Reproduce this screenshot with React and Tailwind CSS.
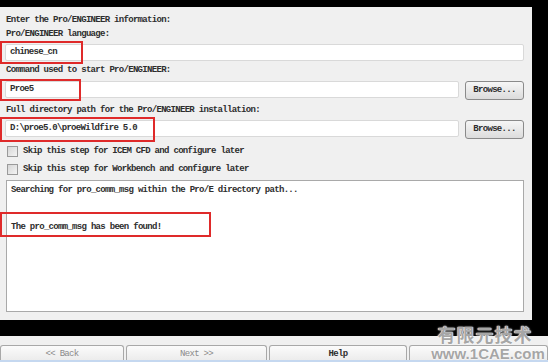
// Pro/ENGINEER setup page of the ANSYS Workbench configurator (screenshot recreation)

const mono = "font-['Liberation_Mono',monospace] font-bold text-[9px] tracking-[-0.7px] text-[#2e2e2e]";

function Label({ children, className = '' }) {
    return <div className={`h-[14px] leading-[14px] pl-[1px] ${className}`}>{children}</div>;
}

function TextBox({ value, className = '' }) {
    return (
        <div className={`h-[17px] bg-white border border-[#d9d9d9] rounded-[2px] pl-[4px] leading-[15px] ${className}`}>
            {value}
        </div>
    );
}

function Browse() {
    return (
        <button className="w-[59px] h-[19px] ml-[6px] rounded-[3px] border border-[#8a8a8a] bg-gradient-to-b from-[#f6f6f6] to-[#dcdcdc] leading-[17px] text-center">
            Browse...
        </button>
    );
}

function Check({ children, className = '' }) {
    return (
        <div className={`flex items-center h-[14px] ${className}`}>
            <span className="w-[11px] h-[11px] ml-[2px] border border-[#9a9a9a] bg-gradient-to-br from-[#d6d6d6] to-[#f4f4f4]" />
            <span className="ml-[5px] leading-[14px]">{children}</span>
        </div>
    );
}

function WizardButton({ children, className = '', dim }) {
    return (
        <div
            className={`h-[15px] rounded-t-[3px] border border-b-0 border-[#a8a8a8] bg-gradient-to-b from-[#fbfbfb] to-[#ececec] text-center leading-[16px] ${dim ? 'text-[#8a8a8a] font-normal' : ''} ${className}`}
        >
            {children}
        </div>
    );
}

export default function App() {
    return (
        <div className={`relative w-[548px] h-[362px] overflow-hidden bg-black ${mono}`}>
            {/* top strip */}
            <div className="h-[7px]" />

            <div className="flex h-[313px]">
                {/* main panel */}
                <div className="w-[532px] bg-[#f0f0f0] pl-[5px] pr-[8px]">
                    <Label className="mt-[6px]">Enter the Pro/ENGINEER information:</Label>
                    <Label>Pro/ENGINEER language:</Label>
                    <TextBox value="chinese_cn" className="mt-[3px]" />

                    <Label className="mt-[2px]">Command used to start Pro/ENGINEER:</Label>
                    <div className="flex mt-[4px] h-[19px]">
                        <TextBox value="Proe5" className="flex-1" />
                        <Browse />
                    </div>

                    <Label className="mt-[3px]">Full directory path for the Pro/ENGINEER installation:</Label>
                    <div className="flex mt-[3px] h-[19px]">
                        <TextBox value="D:\proe5.0\proeWildfire 5.0" className="flex-1" />
                        <Browse />
                    </div>

                    <Check className="mt-[5px]">Skip this step for ICEM CFD and configure later</Check>
                    <Check className="mt-[4px]">Skip this step for Workbench and configure later</Check>

                    {/* log output */}
                    <div className="mt-[4px] ml-[1px] h-[132px] bg-white border border-[#a9a9a9] pl-[4px] pt-[2px]">
                        <div className="h-[14px] leading-[14px]">Searching for pro_comm_msg within the Pro/E directory path...</div>
                        <div className="h-[14px] mt-[23px] leading-[14px]">The pro_comm_msg has been found!</div>
                    </div>
                </div>
                <div className="flex-1" />
            </div>

            {/* black band, then wizard buttons */}
            <div className="h-[16px]" />
            <div className="h-[26px] bg-[#f0f0f0] pt-[9px]">
                <div className="flex gap-[2px] h-[15px]">
                    <WizardButton className="w-[124px]" dim>&lt;&lt; Back</WizardButton>
                    <WizardButton className="w-[141px]" dim>Next &gt;&gt;</WizardButton>
                    <WizardButton className="w-[138px]">Help</WizardButton>
                    <WizardButton className="flex-1" />
                </div>
                <div className="h-[2px] bg-[#c5d8f0]" />
            </div>

            {/* annotation boxes */}
            <div className="absolute left-0 top-[41px] w-[83px] h-[23px] border-2 border-[#df2a2a]" />
            <div className="absolute left-0 top-[79px] w-[81px] h-[22px] border-2 border-[#df2a2a]" />
            <div className="absolute left-0 top-[117px] w-[155px] h-[25px] border-2 border-[#df2a2a]" />
            <div className="absolute left-0 top-[212px] w-[211px] h-[25px] border-2 border-[#df2a2a]" />

            {/* watermark */}
            <div className="absolute left-[432px] top-[324px] w-[106px] text-center font-['Noto_Sans_CJK_SC',sans-serif] font-bold text-[18px] leading-[20px] tracking-[1px] text-[#a6a6a6] [text-shadow:0_0_1px_#fff,0_0_1px_#fff,0_0_2px_#fff]">
                有限元技术
            </div>
            <div className="absolute left-[428px] top-[346px] w-[120px] text-center font-['Liberation_Sans',sans-serif] font-bold text-[15px] leading-[16px] tracking-[0px] text-[#a6a6a6] [text-shadow:0_0_1px_#fff,0_0_1px_#fff,0_0_2px_#fff]">
                www.1CAE.com
            </div>
        </div>
    );
}
